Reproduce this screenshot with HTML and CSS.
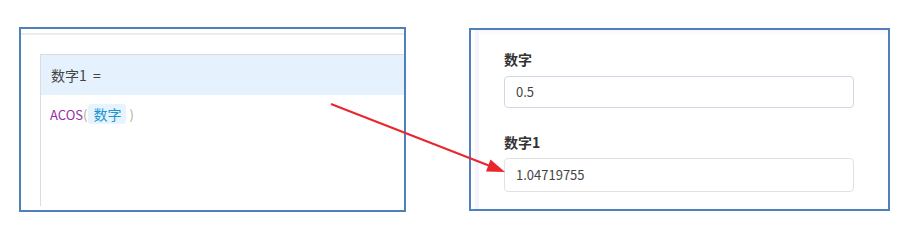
FILE: index.html
```html
<!DOCTYPE html>
<html lang="zh">
<head>
  <meta charset="UTF-8">
  <title>ACOS</title>
  <link rel="stylesheet" href="styles.css">
</head>
<body>
  <div class="shot shot-left">
    <div class="top-line"></div>
    <div class="editor">
      <div class="editor-head">数字1&nbsp;&nbsp;=</div>
      <div class="editor-body">
        <span class="fn">ACOS</span><span class="paren">(</span><span class="token">数字</span><span class="paren">)</span>
      </div>
    </div>
  </div>

  <div class="shot shot-right">
    <div class="form">
      <label class="field-label">数字</label>
      <div class="field-input">0.5</div>
      <label class="field-label">数字1</label>
      <div class="field-input result">1.04719755</div>
    </div>
  </div>

  <!-- arrow from formula to result -->
  <svg class="arrow" width="906" height="244" viewBox="0 0 906 244">
    <line x1="331" y1="104" x2="490" y2="166" stroke="#e8262d" stroke-width="2"/>
    <polygon points="505,172 490.5,159.5 486,171.5" fill="#e8262d"/>
  </svg>
</body>
</html>
```

FILE: styles.css
```css
body {
  margin: 0;
  padding: 27px 0 0 19px;
  display: flex;
  align-items: flex-start;
  gap: 63px;
  background-color: #fff;
  font-family: "Noto Sans CJK SC", "Noto Sans", sans-serif;
  font-size: 13px;
  color: #333;
  position: relative;
  height: 244px;
  box-sizing: border-box;
}

.shot {
  border: 2px solid #4f80bb;
  background-color: #fff;
  overflow: hidden;
  position: relative;
  box-sizing: border-box;
}

.shot-left {
  width: 387px;
  height: 185px;
  padding-top: 4px;
}

.shot-left::before {
  content: "";
  position: absolute;
  left: -8px;
  top: 48px;
  width: 6px;
  height: 1px;
  background-color: #e4e4e4;
}

.top-line {
  height: 2px;
  background-color: #ececec;
}

.editor {
  margin: 19px 0 0 19px;
  height: 151px;
  border-left: 1px solid #dcdcdc;
  border-top: 1px solid #dcdcdc;
}

.editor-head {
  height: 40px;
  line-height: 40px;
  padding-left: 10px;
  background-color: #e5f2fd;
  font-size: 14px;
  color: #444;
}

.editor-body {
  padding: 9px 0 0 9px;
  line-height: 20px;
}

.editor-body .fn {
  color: #9b2ba8;
}

.editor-body .paren {
  color: #b4ab8e;
}

.editor-body .token {
  display: inline-block;
  margin: 0 3px 0 1px;
  padding: 0 5px;
  border-radius: 3px;
  background-color: #e8f4fd;
  color: #1b95d4;
  font-size: 14px;
}

.shot-right {
  width: 421px;
  height: 183px;
  margin-top: 1px;
  padding-left: 4px;
}

.form {
  height: 100%;
  border-left: 4px solid #f3f5fa;
  padding: 17px 0 0 25px;
  background: linear-gradient(#f7f7f7, #fff 6px);
}

.field-label {
  display: block;
  font-weight: bold;
  font-size: 14px;
  line-height: 24px;
  color: #333;
}

.field-input {
  width: 350px;
  height: 32px;
  margin: 5px 0 22px;
  box-sizing: border-box;
  padding-left: 11px;
  border: 1px solid #cfd8e5;
  border-radius: 4px;
  line-height: 30px;
  font-size: 13px;
  color: #444;
}

.field-input.result {
  height: 34px;
  line-height: 32px;
  margin-top: 4px;
  border-color: #e2e2e2;
}

.arrow {
  position: absolute;
  left: 0;
  top: 0;
  pointer-events: none;
}
```
